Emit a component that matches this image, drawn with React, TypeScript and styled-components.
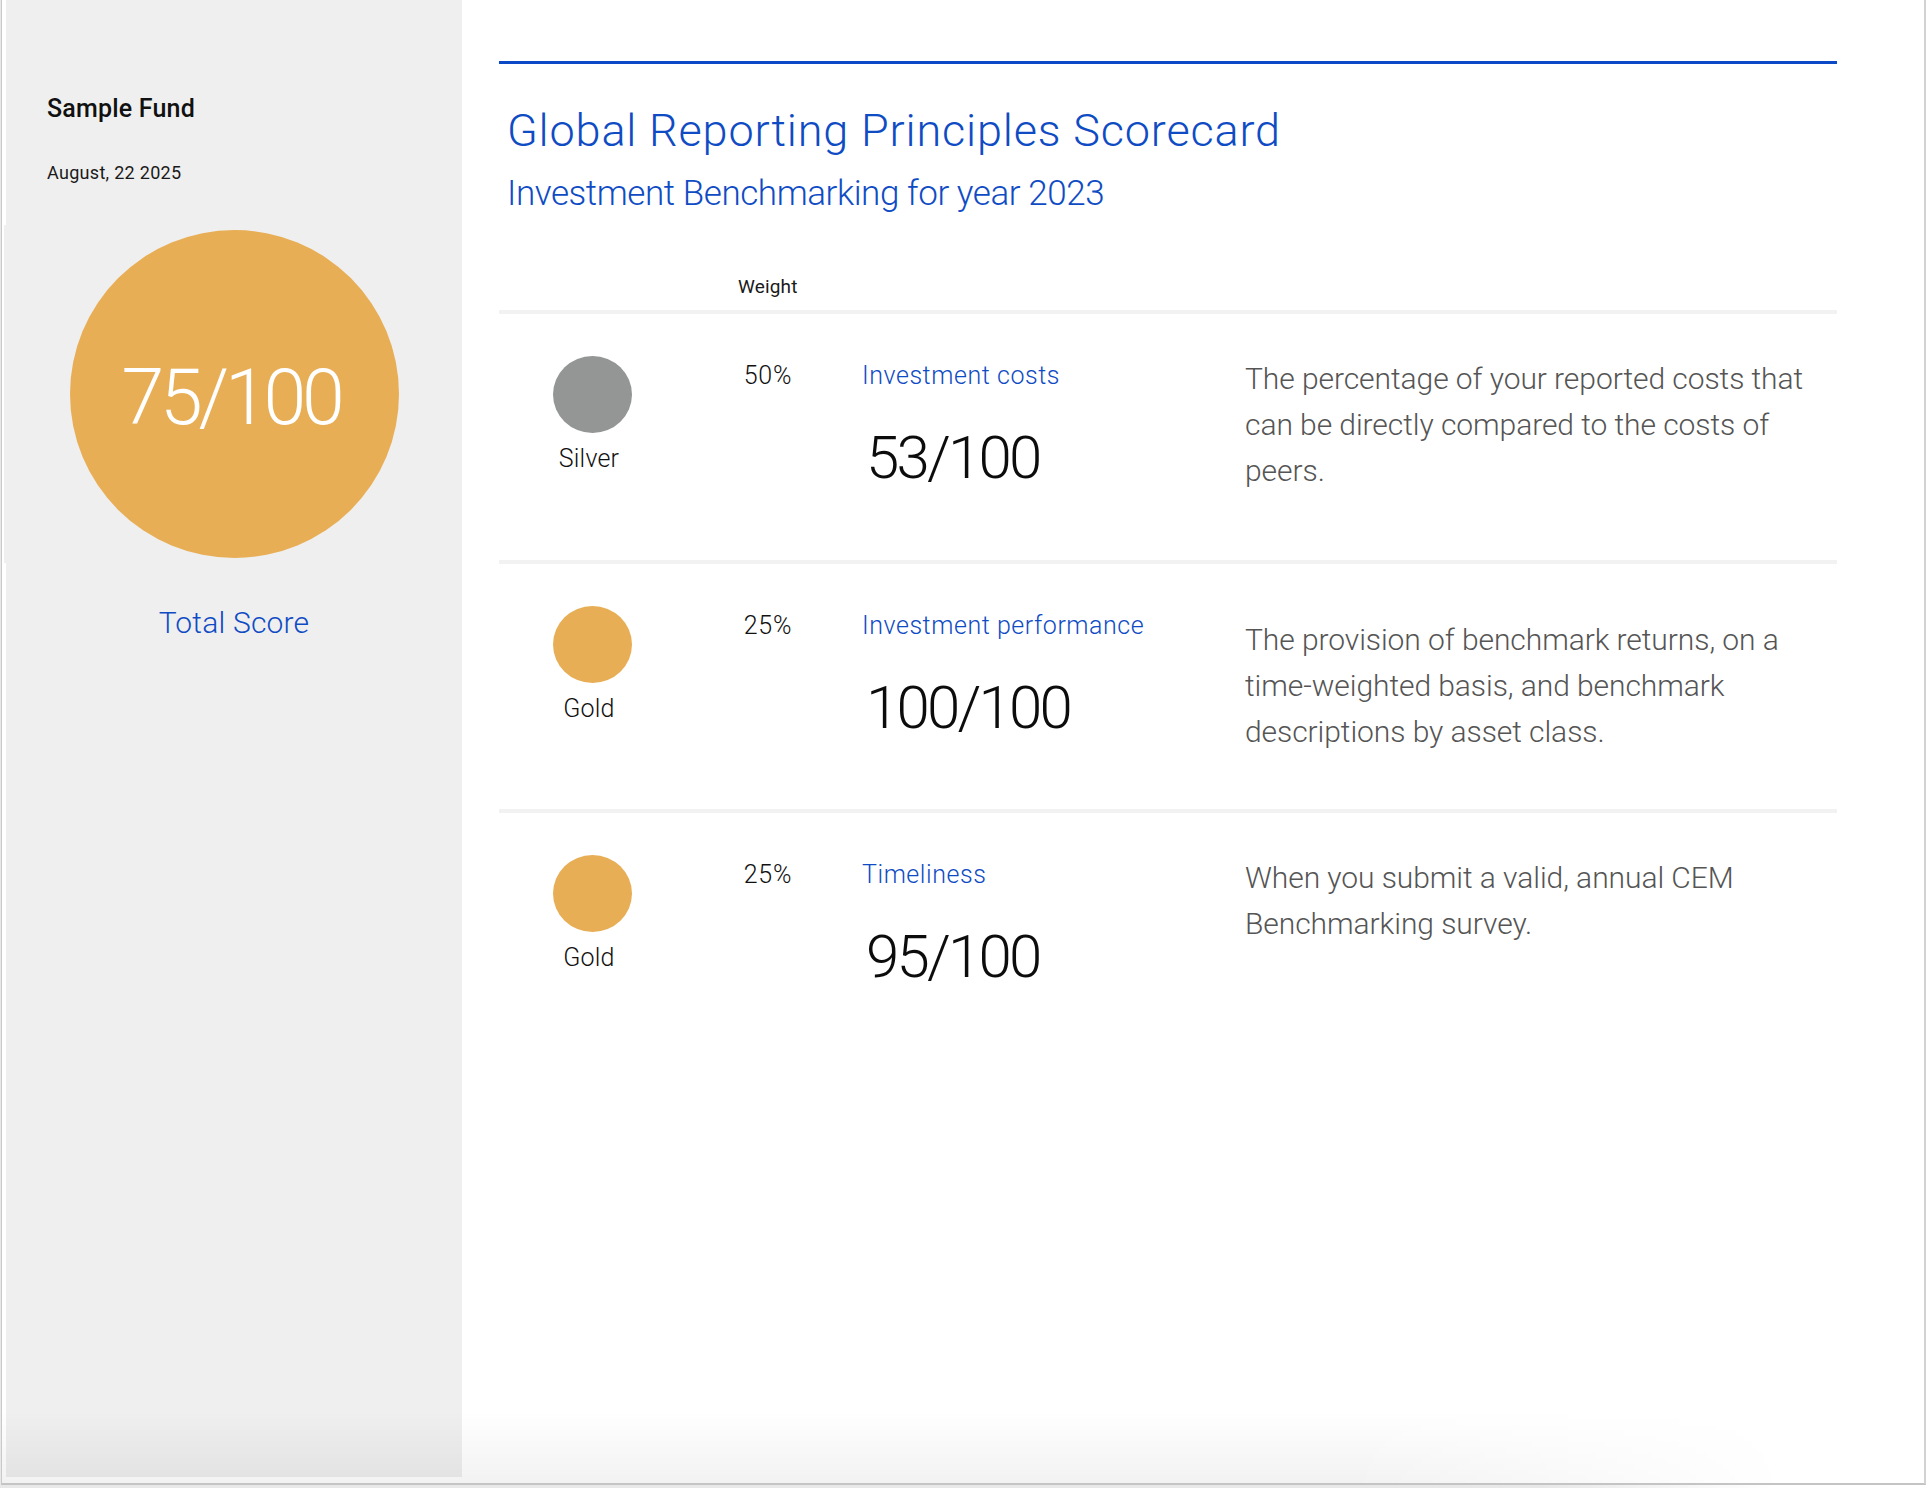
import styled, { createGlobalStyle } from "styled-components";

const BLUE = "#0f4cc4";
const GOLD = "#e8ae55";
const SILVER = "#949695";

const GlobalStyle = createGlobalStyle`
  html, body {
    margin: 0;
    padding: 0;
    background: #fff;
  }
  body {
    width: 1928px;
    height: 1488px;
    overflow: hidden;
    font-family: Roboto, "Liberation Sans", sans-serif;
    font-weight: 300;
    background: linear-gradient(90deg, #e8e8e8 0%, #e8e8e8 80%, #ffffff 92%);
  }
`;

const Frame = styled.div`
  position: relative;
  box-sizing: border-box;
  display: flex;
  width: 1925px;
  height: 1485px;
  margin-left: 1px;
  padding: 0 0 6px 4px;
  background: #fff;
  border-left: 1px solid #c9c9c9;
  border-right: 2px solid #d2d2d2;
  border-bottom: 2px solid #c4c4c4;

  &::after {
    content: "";
    position: absolute;
    left: 0;
    right: 0;
    bottom: 0;
    height: 72px;
    pointer-events: none;
    background: linear-gradient(to top, rgba(0, 0, 0, 0.05), rgba(0, 0, 0, 0));
    mask-image: linear-gradient(90deg, #000 70%, transparent 93%);
  }
`;

const Sidebar = styled.aside`
  flex: 0 0 456px;
  box-sizing: border-box;
  padding-top: 95px;
  background: #efefef;
`;

const FundName = styled.h1`
  margin: 0 0 0 41px;
  font-size: 25px;
  line-height: 28px;
  font-weight: 500;
  letter-spacing: 0.2px;
  color: #111;
`;

const ReportDate = styled.div`
  margin: 38px 0 0 41px;
  font-size: 18px;
  line-height: 24px;
  font-weight: 400;
  letter-spacing: 0.3px;
  color: #1a1a1a;
`;

const CircleBand = styled.div`
  display: flex;
  justify-content: center;
  align-items: center;
  height: 338px;
  margin: 40px 0 0 -2px;
  padding-left: 2px;
  background: #efefef;
`;

const TotalCircle = styled.div`
  display: flex;
  justify-content: center;
  align-items: center;
  box-sizing: border-box;
  width: 329px;
  height: 328px;
  padding: 8px 6px 0 0;
  border-radius: 50%;
  background: ${GOLD};
  color: #fff;
  font-size: 77px;
  line-height: 1;
  letter-spacing: -4.2px;
`;

const TotalLabel = styled.div`
  margin-top: 41px;
  text-align: center;
  font-size: 30px;
  line-height: 38px;
  font-weight: 300;
  letter-spacing: 0.2px;
  color: ${BLUE};
`;

const Main = styled.main`
  flex: 0 0 1338px;
  margin-left: 37px;
  padding-top: 61px;
`;

const TopRule = styled.div`
  height: 3px;
  background: #0b49c6;
`;

const Title = styled.h2`
  margin: 39px 0 0 8px;
  font-size: 45px;
  line-height: 56px;
  font-weight: 300;
  letter-spacing: 0.83px;
  color: ${BLUE};
`;

const Subtitle = styled.h3`
  margin: 13px 0 0 8px;
  font-size: 35px;
  line-height: 44px;
  font-weight: 300;
  letter-spacing: -0.43px;
  color: ${BLUE};
`;

const ScoreHeader = styled.div`
  display: flex;
  height: 35px;
  margin-top: 59px;
  padding-left: 239px;
  font-size: 19px;
  line-height: 24px;
  font-weight: 400;
  letter-spacing: 0.15px;
  color: #1a1a1a;
`;

const Row = styled.section`
  display: grid;
  grid-template-columns: 239px 124px 383px 1fr;
  height: 245.5px;
  border-top: 4px solid #f2f2f2;
`;

const MedalCell = styled.div`
  display: flex;
  flex-direction: column;
  padding-top: 42px;
`;

const Medal = styled.div<{ $color: string }>`
  width: 79px;
  height: 77px;
  margin-left: 54px;
  border-radius: 50%;
  background: ${(p) => p.$color};
`;

const MedalLabel = styled.div`
  width: 180px;
  margin-top: 11px;
  text-align: center;
  font-size: 25px;
  line-height: 30px;
  letter-spacing: 0.2px;
  color: #111;
`;

const WeightCell = styled.div`
  width: 60px;
  padding-top: 47px;
  text-align: center;
  font-size: 25px;
  line-height: 30px;
  letter-spacing: 0.8px;
  color: #111;
`;

const MetricCell = styled.div`
  padding-top: 47px;
`;

const MetricName = styled.div`
  font-size: 25px;
  line-height: 30px;
  font-weight: 300;
  letter-spacing: 0.55px;
  color: ${BLUE};
`;

const MetricScore = styled.div`
  margin: 31px 0 0 4px;
  font-size: 60px;
  line-height: 72px;
  letter-spacing: -2.8px;
  color: #0c0c0c;
`;

const Description = styled.p<{ $top: number }>`
  margin: 0;
  padding-top: ${(p) => p.$top}px;
  font-size: 30px;
  line-height: 46.2px;
  letter-spacing: -0.07px;
  color: #555;
`;

type Metric = {
  medal: string;
  color: string;
  weight: string;
  name: string;
  score: string;
  text: string;
  top: number;
};

const metrics: Metric[] = [
  {
    medal: "Silver",
    color: SILVER,
    weight: "50%",
    name: "Investment costs",
    score: "53/100",
    text: "The percentage of your reported costs that can be directly compared to the costs of peers.",
    top: 42,
  },
  {
    medal: "Gold",
    color: GOLD,
    weight: "25%",
    name: "Investment performance",
    score: "100/100",
    text: "The provision of benchmark returns, on a time-weighted basis, and benchmark descriptions by asset class.",
    top: 53,
  },
  {
    medal: "Gold",
    color: GOLD,
    weight: "25%",
    name: "Timeliness",
    score: "95/100",
    text: "When you submit a valid, annual CEM Benchmarking survey.",
    top: 42,
  },
];

export default function App() {
  return (
    <>
      <GlobalStyle />
      <Frame>
        <Sidebar>
          <FundName>Sample Fund</FundName>
          <ReportDate>August, 22 2025</ReportDate>
          <CircleBand>
            <TotalCircle>75/100</TotalCircle>
          </CircleBand>
          <TotalLabel>Total Score</TotalLabel>
        </Sidebar>
        <Main>
          <TopRule />
          <Title>Global Reporting Principles Scorecard</Title>
          <Subtitle>Investment Benchmarking for year 2023</Subtitle>
          <ScoreHeader>Weight</ScoreHeader>
          {metrics.map((m) => (
            <Row key={m.name}>
              <MedalCell>
                <Medal $color={m.color} />
                <MedalLabel>{m.medal}</MedalLabel>
              </MedalCell>
              <WeightCell>{m.weight}</WeightCell>
              <MetricCell>
                <MetricName>{m.name}</MetricName>
                <MetricScore>{m.score}</MetricScore>
              </MetricCell>
              <Description $top={m.top}>{m.text}</Description>
            </Row>
          ))}
        </Main>
      </Frame>
    </>
  );
}
